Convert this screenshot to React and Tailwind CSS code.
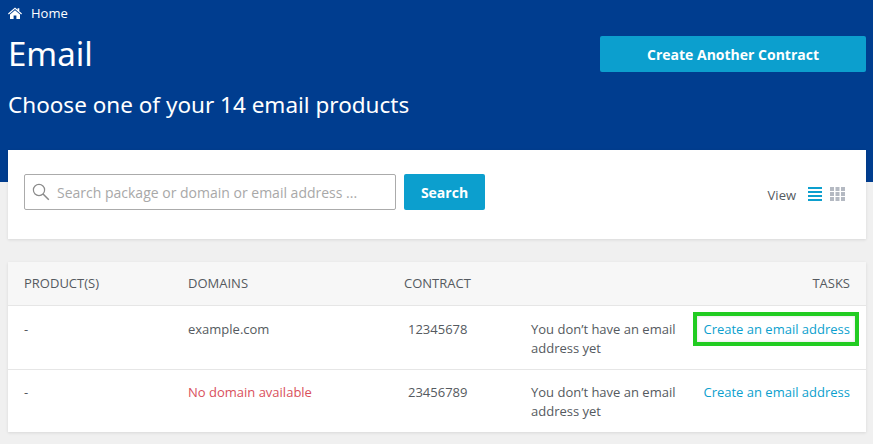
import React from "react";

const head = { fontFamily: '"Noto Sans", sans-serif' };
const body = { fontFamily: '"Open Sans", sans-serif' };

function Row({ domain, red, contract, highlight, last }) {
  return (
    <div className={`grid grid-cols-[164px_216px_127px_1fr] pl-4 pr-4 text-[13px] leading-[19px] text-[#555a60] ${last ? "h-[62px] pt-[13px]" : "h-[64px] border-b border-[#e6e6e6] pt-[14px]"}`}>
      <div>-</div>
      <div className={red ? "text-[#d9505c]" : ""}>{domain}</div>
      <div className="pl-1">{contract}</div>
      <div className="flex justify-between">
        <div className="w-[160px]">You don’t have an email address yet</div>
        <div className="relative h-[19px] whitespace-nowrap text-[#0c9fce]">
          Create an email address
          {highlight && <span className="absolute -left-[10px] -right-[9px] -top-[8px] -bottom-[7px] border-4 border-[#22cc22] shadow-[inset_0_0_3px_rgba(0,0,0,0.15)]" />}
        </div>
      </div>
    </div>
  );
}

export default function App() {
  return (
    <div className="h-[444px] w-[873px] overflow-hidden bg-[#f0f0f0]" style={body}>
      <div className="h-[182px] bg-[#003d8f] pl-2 pr-[7px] text-white">
        <div className="flex h-[27px] items-center gap-[10px] pt-px text-[13px]">
          <svg width="14" height="12" viewBox="0 0 14 12" fill="#fff" className="-mt-[2px]">
            <path d="M7 0.5 L9.6 2.8 V1.3 H11.3 V4.3 L14 6.6 L13.2 7.4 L7 2.1 L0.8 7.4 L0 6.6 Z" />
            <path d="M7 3.2 L12 7.4 V12 H8.4 V8.4 H5.6 V12 H2 V7.4 Z" />
          </svg>
          <span className="-ml-px">Home</span>
        </div>
        <div className="flex items-start justify-between">
          <h1 className="mt-[7px] text-[33px] leading-[40px]" style={head}>Email</h1>
          <button className="mt-[9px] h-[36px] w-[266px] rounded-[2px] bg-[#0c9fce] text-[14px] font-bold text-white">Create Another Contract</button>
        </div>
        <p className="mt-[16px] text-[22.5px] leading-[30px]" style={head}>Choose one of your 14 email products</p>
      </div>

      <div className="ml-2 mr-[7px] -mt-[32px] flex h-[89px] items-start justify-between bg-white pl-4 pr-5 pt-6 shadow-[0_1px_3px_rgba(0,0,0,0.1)]">
        <div className="flex gap-2">
          <div className="flex h-[36px] w-[372px] items-center rounded-[2px] border border-[#ababab] pl-[7px] text-[14px] text-[#a8a8a8]">
            <svg width="18" height="18" viewBox="0 0 18 18" fill="none" stroke="#8a8a8a" strokeWidth="1.2">
              <circle cx="7" cy="7" r="5.6" />
              <path d="M11 11 L16.8 16.8" strokeWidth="1.5" />
            </svg>
            <span className="ml-[7px]">Search package or domain or email address ...</span>
          </div>
          <button className="h-[36px] w-[81px] rounded-[2px] bg-[#0c9fce] text-[14px] font-bold text-white">Search</button>
        </div>
        <div className="mt-[9px] flex items-center text-[13px] leading-[20px] text-[#555a60]">
          <span className="mt-[2px]">View</span>
          <svg width="14" height="14" viewBox="0 0 14 14" className="ml-[12px]" fill="#0c9fce">
            <rect x="0" y="0" width="14" height="2" />
            <rect x="0" y="4" width="14" height="2" />
            <rect x="0" y="8" width="14" height="2" />
            <rect x="0" y="12" width="14" height="2" />
          </svg>
          <svg width="16" height="14" viewBox="0 0 16 14" className="ml-[8px]" fill="#b4b9c2">
            {[0, 5.5, 11].flatMap((x) => [0, 5, 10].map((y) => <rect key={`${x}-${y}`} x={x} y={y} width="4" height="4" />))}
          </svg>
        </div>
      </div>

      <div className="ml-2 mr-[7px] mt-[23px] bg-white shadow-[0_1px_3px_rgba(0,0,0,0.1)]">
        <div className="grid h-[44px] grid-cols-[164px_216px_127px_1fr] items-center border-b border-[#e6e6e6] bg-[#f7f7f7] px-4 text-[13px] text-[#555a60]">
          <div>PRODUCT(S)</div>
          <div>DOMAINS</div>
          <div>CONTRACT</div>
          <div className="text-right">TASKS</div>
        </div>
        <Row domain="example.com" contract="12345678" highlight />
        <Row domain="No domain available" red contract="23456789" last />
      </div>
    </div>
  );
}
